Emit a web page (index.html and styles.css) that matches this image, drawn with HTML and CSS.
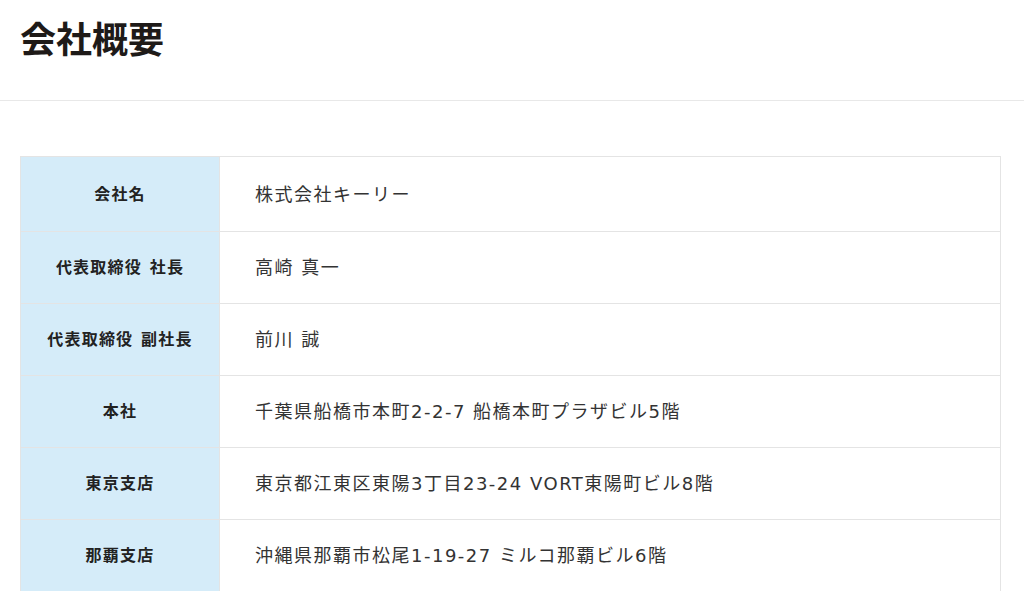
FILE: index.html
```html
<!DOCTYPE html>
<html lang="ja">
<head>
<meta charset="utf-8">
<link rel="stylesheet" href="styles.css">
</head>
<body>
<header class="page-head">
  <h1 class="title">会社概要</h1>
</header>
<main class="content">
  <table class="info">
    <tr><th>会社名</th><td>株式会社キーリー</td></tr>
    <tr><th>代表取締役 社長</th><td>高崎 真一</td></tr>
    <tr><th>代表取締役 副社長</th><td>前川 誠</td></tr>
    <tr><th>本社</th><td>千葉県船橋市本町2-2-7 船橋本町プラザビル5階</td></tr>
    <tr><th>東京支店</th><td>東京都江東区東陽3丁目23-24 VORT東陽町ビル8階</td></tr>
    <tr><th>那覇支店</th><td>沖縄県那覇市松尾1-19-27 ミルコ那覇ビル6階</td></tr>
  </table>
</main>
</body>
</html>
```

FILE: styles.css
```css
* { box-sizing: border-box; }
html, body { margin: 0; padding: 0; background: #fff; }
body {
  font-family: "Noto Sans CJK JP", "Noto Sans", sans-serif;
  color: #333;
  overflow: hidden;
}
.page-head {
  height: 101px;
  border-bottom: 1px solid #e8e8e8;
  padding: 13px 20px 0;
}
.title {
  margin: 0;
  font-size: 36px;
  line-height: 48px;
  font-weight: 700;
  color: #1e1a18;
}
.content {
  padding: 55px 23px 0 20px;
}
.info {
  width: 100%;
  border-collapse: collapse;
  border: 1px solid #e4e4e4;
}
.info th, .info td {
  height: 72px;
  padding-top: 0;
  padding-bottom: 3px;
  border-top: 1px solid #e4e4e4;
  border-bottom: 1px solid #e4e4e4;
  vertical-align: middle;
}
.info th {
  width: 199px;
  background: #d5ecf9;
  font-size: 16px;
  font-weight: 700;
  color: #222;
  text-align: center;
  letter-spacing: 1.2px;
  word-spacing: 3px;
  border-right: 1px solid #e4e4e4;
}
.info td {
  padding-left: 35px;
  font-family: "DejaVu Sans", "Noto Sans CJK JP", sans-serif;
  font-size: 18px;
  color: #333;
  letter-spacing: 1.5px;
  text-align: left;
}
.info tr:first-child th, .info tr:first-child td { height: 75px; }
```
